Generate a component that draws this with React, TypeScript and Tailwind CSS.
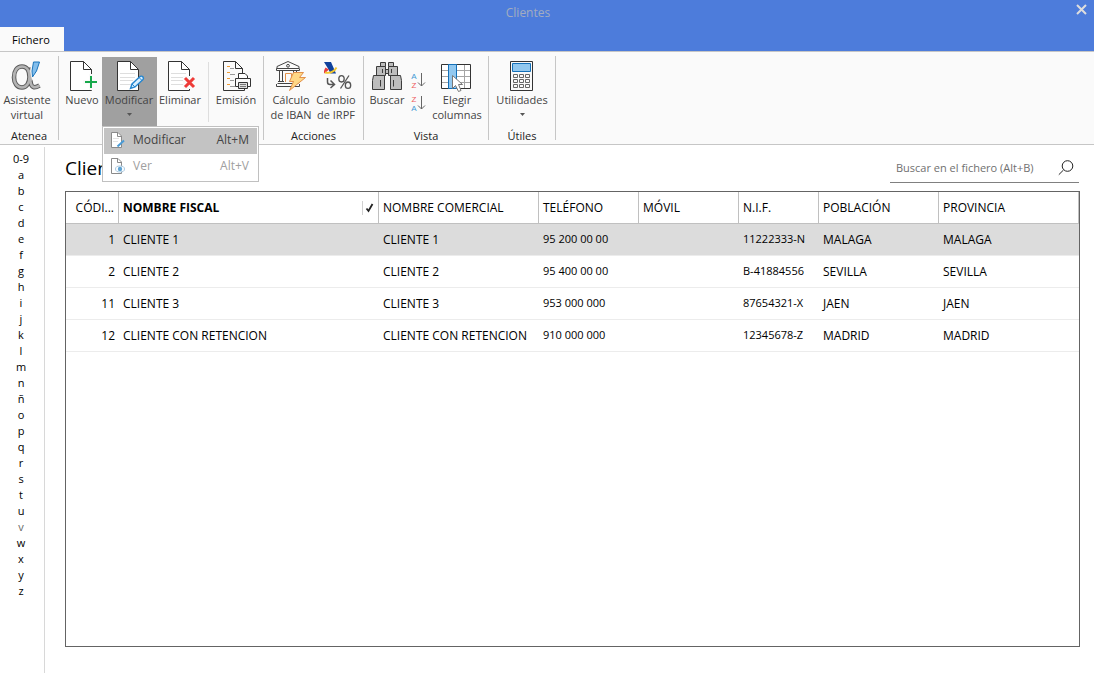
import type { ReactNode } from "react";

const letters = ["0-9", ..."abcdefghijklmnñopqrstuvwxyz"];

const columns = [
  { title: "CÓDI...", width: "w-[53px]" },
  { title: "NOMBRE FISCAL", width: "w-[260px]", sorted: true },
  { title: "NOMBRE COMERCIAL", width: "w-[160px]" },
  { title: "TELÉFONO", width: "w-[100px]", compact: true },
  { title: "MÓVIL", width: "w-[100px]", compact: true },
  { title: "N.I.F.", width: "w-[80px]", compact: true },
  { title: "POBLACIÓN", width: "w-[120px]" },
  { title: "PROVINCIA", width: "" },
];

const rows = [
  ["1", "CLIENTE 1", "CLIENTE 1", "95 200 00 00", "", "11222333-N", "MALAGA", "MALAGA"],
  ["2", "CLIENTE 2", "CLIENTE 2", "95 400 00 00", "", "B-41884556", "SEVILLA", "SEVILLA"],
  ["11", "CLIENTE 3", "CLIENTE 3", "953 000 000", "", "87654321-X", "JAEN", "JAEN"],
  ["12", "CLIENTE CON RETENCION", "CLIENTE CON RETENCION", "910 000 000", "", "12345678-Z", "MADRID", "MADRID"],
];

function Icon({ children }: { children: ReactNode }) {
  return (
    <svg viewBox="0 0 32 32" className="h-8 w-8 shrink-0" fill="none" aria-hidden="true">
      {children}
    </svg>
  );
}

function Sheet({ lines = false }: { lines?: boolean }) {
  return (
    <>
      <path d="M4.5 1.5H17.5L25.5 9.5V30.5H4.5Z" fill="#fff" stroke="#333" />
      <path d="M17.5 1.5V9.5H25.5" stroke="#333" />
      {lines && <path d="M7 13.5H22M7 17.5H22M7 20.5H20M7 24.5H20" stroke="#dedede" />}
    </>
  );
}

function AlphaIcon() {
  const alpha =
    "M18.5 17C18.5 23 15.5 27.5 11 27.5C6 27.5 3 23 3 17.5C3 11 6 6.5 11 6.5C16 6.5 18.5 11 18.5 17ZM20.5 8C18.5 13 18.5 19 20 24Q21.5 29.5 28.5 25.5";
  return (
    <Icon>
      <path d={alpha} stroke="#5c5c5c" strokeWidth="4.6" />
      <path d={alpha} stroke="#b4b4b4" strokeWidth="2.6" />
      <path d="M22.5 2H28.5L25.5 11L21.5 17.5L20.5 11Z" fill="#83beec" stroke="#fafafa" strokeWidth="2.5" />
      <path d="M22.5 2H28.5L25.5 11L21.5 17L21 11Z" fill="#83beec" stroke="#1b75bb" />
    </Icon>
  );
}

function NewIcon() {
  return (
    <Icon>
      <Sheet />
      <path d="M25 14V30M17 22H32" stroke="#fafafa" strokeWidth="4" />
      <path d="M25 16V28M19 22H31" stroke="#17a84b" strokeWidth="2" />
    </Icon>
  );
}

function EditIcon() {
  return (
    <Icon>
      <Sheet lines />
      <path d="M17.5 28.5L19 24L27 16.5Q29 15.5 30 17Q31 18.5 30 19.5L22 27Z" fill="#d9efff" stroke="#2485cf" strokeWidth="1.4" />
      <path d="M19 24L22 27M26 17.5L29 20.5" stroke="#2485cf" />
    </Icon>
  );
}

function DeleteIcon() {
  return (
    <Icon>
      <Sheet lines />
      <path d="M19 16H32V29H19Z" fill="#fafafa" />
      <path d="M21 18L30 27M30 18L21 27" stroke="#ee3b38" strokeWidth="3" />
    </Icon>
  );
}

function PrintIcon() {
  return (
    <Icon>
      <path d="M3.5 1.5H15.5L22.5 8.5V14M3.5 1.5V30.5H24.5V27M15.5 1.5V8.5H22.5" stroke="#333" />
      <path d="M7 6.5H10M7 12.5H10M7 18.5H10M7 24.5H10" stroke="#ef9c35" />
      <path d="M10 8.5H14M10 14.5H15M10 20.5H14M10 26.5H15" stroke="#999" />
      <path d="M15.5 18.5H30.5V26.5H15.5Z" fill="#fafafa" stroke="#333" />
      <path d="M18.5 18.5V13.5H25L27.5 16V18.5Z" fill="#fff" stroke="#333" />
      <path d="M18.5 22.5H27.5V28.5H18.5Z" fill="#ddd" stroke="#333" />
      <path d="M20 24.5H26M20 26.5H26" stroke="#777" />
    </Icon>
  );
}

function BankIcon() {
  return (
    <Icon>
      <path d="M2 8.5V6.5L13 1.5L24 6.5V8.5H1.5V10.5H24.5V8.5" stroke="#444" />
      <circle cx="13" cy="5.8" r="1.4" stroke="#444" />
      <path d="M4.5 11V21M7.5 11V21M18.5 11V21M21.5 11V21M3 21.5H9M17 21.5H23M2.5 23.5H23.5M1.5 26.5H24.5M1.5 24V26.5M24.5 24V26.5" stroke="#444" />
      <path d="M10.5 22V13.5H16.5V22" stroke="#e2914b" />
      <path d="M18.5 12.5H28.5L24.5 17.5H30.5L14.5 30.5L18.5 21.5H14.5Z" fill="#ffd886" stroke="#e2914b" />
    </Icon>
  );
}

function TaxIcon() {
  return (
    <Icon>
      <path d="M4 2H11L16 13.5H10.5L8 8.5Z" fill="#10429c" />
      <path d="M5.5 7.5L9 9.5L4.5 13.5Q3 12 5.5 7.5Z" fill="#e43b42" />
      <path d="M5 12.5Q13 14 16.5 7.5" stroke="#f4c72f" strokeWidth="1.8" />
      <path d="M7.5 18V22Q7.5 24.5 10 24.5H14M10.5 20.5L14.5 24.5L10.5 28" stroke="#555" strokeWidth="1.5" />
      <ellipse cx="21.5" cy="18.8" rx="2.7" ry="3.2" stroke="#555" strokeWidth="1.3" />
      <ellipse cx="28" cy="25.2" rx="2.7" ry="3.2" stroke="#555" strokeWidth="1.3" />
      <path d="M29 15.5L20.5 28.5" stroke="#555" strokeWidth="1.3" />
    </Icon>
  );
}

function BinocularsIcon() {
  return (
    <Icon>
      <g fill="#bdbdbd" stroke="#3c3c3c">
        <path d="M9.5 2.5H14.5V6.5H9.5ZM17.5 2.5H22.5V6.5H17.5ZM14 9.5H18V13.5H14Z" />
        <path d="M5.5 6.5H14.5V15.5H5.5ZM17.5 6.5H26.5V15.5H17.5Z" />
        <path d="M2.5 15.5H13.5V29.5H1.5V20.5ZM19.5 15.5H29.5L30.5 20.5V29.5H19.5Z" />
        <path d="M9.5 20V26.5M22.5 20V26.5M11.5 9V13M20.5 9V13" />
      </g>
    </Icon>
  );
}

function SortIcon({ top, bottom }: { top: "A" | "Z"; bottom: "A" | "Z" }) {
  return (
    <svg
      viewBox="0 0 16 18"
      className="h-[18px] w-4 overflow-visible font-['Liberation_Sans',sans-serif] text-[8px]"
      fill="none"
      aria-hidden="true"
    >
      <text x="3" y="8" textAnchor="middle" className={top === "A" ? "fill-[#4299d4]" : "fill-[#ee5a60]"}>
        {top}
      </text>
      <text x="3" y="17" textAnchor="middle" className={bottom === "A" ? "fill-[#4299d4]" : "fill-[#ee5a60]"}>
        {bottom}
      </text>
      <path d="M10.5 2V15M7 11.5L10.5 15L14 11.5" stroke="#666" />
    </svg>
  );
}

function ColumnsIcon() {
  return (
    <Icon>
      <path d="M.5 4.5H29.5V28.5H.5Z" fill="#fff" stroke="#333" />
      <path d="M1 10.5H29M1 16.5H29M1 22.5H29M23.5 5V28" stroke="#a5a5a5" />
      <path d="M7.5 4.5H15.5V28.5H7.5Z" fill="#92c8ef" stroke="#1470b9" />
      <path d="M11.5 15.5V28.5L14.5 25.5L17.5 31.5L20 30.5L17.5 24.5H21.5Z" fill="#fff" stroke="#777" />
    </Icon>
  );
}

function CalculatorIcon() {
  const keys = [14.5, 19.5, 24.5];
  return (
    <Icon>
      <path d="M4.5 1.5H26.5V30.5H4.5Z" fill="#fafafa" stroke="#333" />
      <path d="M6.5 3.5H24.5V11.5H6.5Z" fill="#92c8ef" stroke="#1470b9" />
      {keys.map((y) => (
        <path key={y} d={`M7.5 ${y}h4v3h-4ZM13.5 ${y}h4v3h-4ZM19.5 ${y}h4v3h-4Z`} stroke="#666" />
      ))}
    </Icon>
  );
}

function MenuIcon({ kind }: { kind: "edit" | "view" }) {
  return (
    <svg viewBox="0 0 16 16" className="h-4 w-4 shrink-0" fill="none" aria-hidden="true">
      <path d="M1.5 .5H8L11.5 4V15.5H1.5Z" fill="#fff" stroke="#8a8a8a" />
      <path d="M7.5 .5V4.5H11.5" stroke="#8a8a8a" />
      {kind === "edit" ? (
        <>
          <path d="M3 6.5H9M3 9.5H8" stroke="#e2e2e2" />
          <path d="M7.5 14.5L14 8.5" stroke="#4a9bd6" strokeWidth="2" />
        </>
      ) : (
        <>
          <ellipse cx="10" cy="11" rx="4.5" ry="3" fill="#fff" stroke="#a9c8df" />
          <circle cx="10" cy="11" r="2.2" fill="#5fa3d3" />
        </>
      )}
    </svg>
  );
}

function Caret() {
  return (
    <svg viewBox="0 0 5 3" className="mt-1.5 h-[3px] w-[5px]" aria-hidden="true">
      <path d="M0 0H5L2.5 3Z" fill="#555" />
    </svg>
  );
}

type RibbonButtonProps = {
  icon: ReactNode;
  label: string;
  width: string;
  caret?: boolean;
  active?: boolean;
};

function RibbonButton({ icon, label, width, caret, active }: RibbonButtonProps) {
  return (
    <button
      type="button"
      aria-haspopup={caret ? "menu" : undefined}
      className={`mt-px flex h-[69px] shrink-0 flex-col items-center pt-[3px] ${width} ${active ? "bg-[#a0a0a0]" : ""}`}
    >
      {icon}
      <span className="text-center leading-[15px] whitespace-pre text-[#444]">{label}</span>
      {caret && <Caret />}
    </button>
  );
}

function RibbonGroup({ title, children }: { title?: string; children: ReactNode }) {
  return (
    <>
      <section aria-label={title} className="shrink-0">
        <div className="flex h-[70px]">{children}</div>
        {title && <h2 className="mt-0.5 text-center leading-4 text-[#222]">{title}</h2>}
      </section>
      <div className="mb-1 w-px shrink-0 bg-[#c6c6c6]" />
    </>
  );
}

function EditMenu() {
  return (
    <div role="menu" className="absolute top-[70px] left-[43px] z-10 w-[157px] border border-[#c0c0c0] bg-white p-px text-[12px]">
      <button type="button" role="menuitem" className="flex h-[26px] w-full items-center bg-[#c3c3c3] pr-2 pb-[3px] pl-1.5 text-[#444]">
        <MenuIcon kind="edit" />
        <span className="ml-[7px]">Modificar</span>
        <span className="ml-auto">Alt+M</span>
      </button>
      <button type="button" role="menuitem" disabled className="flex h-[26px] w-full items-center pr-2 pb-[3px] pl-1.5 text-[#a0a0a0]">
        <MenuIcon kind="view" />
        <span className="ml-[7px]">Ver</span>
        <span className="ml-auto">Alt+V</span>
      </button>
    </div>
  );
}

function Ribbon() {
  return (
    <div className="flex h-[94px] border-t border-b border-[#c6c6c6] bg-[#fafafa] pt-1 text-[11px]">
      <RibbonGroup title="Atenea">
        <RibbonButton icon={<AlphaIcon />} label={"Asistente\nvirtual"} width="w-[58px] pr-1" />
      </RibbonGroup>
      <div className="relative flex">
        <RibbonGroup>
          <RibbonButton icon={<NewIcon />} label="Nuevo" width="ml-1 w-[39px] pr-px" />
          <RibbonButton icon={<EditIcon />} label="Modificar" width="w-[55px] pr-px" caret active />
          <RibbonButton icon={<DeleteIcon />} label="Eliminar" width="w-[48px] pr-0.5" />
          <div className="mt-1.5 mb-1 ml-[3px] w-px bg-[#dedede]" />
          <RibbonButton icon={<PrintIcon />} label="Emisión" width="w-[54px]" />
        </RibbonGroup>
        <EditMenu />
      </div>
      <RibbonGroup title="Acciones">
        <RibbonButton icon={<BankIcon />} label={"Cálculo\nde IBAN"} width="ml-1 w-[46px]" />
        <RibbonButton icon={<TaxIcon />} label={"Cambio\nde IRPF"} width="mr-[3px] w-[46px] pr-0.5" />
      </RibbonGroup>
      <RibbonGroup title="Vista">
        <RibbonButton icon={<BinocularsIcon />} label="Buscar" width="w-[46px]" />
        <div className="ml-px flex flex-col gap-[5px] pt-[15px]">
          <button type="button" aria-label="Orden ascendente">
            <SortIcon top="A" bottom="Z" />
          </button>
          <button type="button" aria-label="Orden descendente">
            <SortIcon top="Z" bottom="A" />
          </button>
        </div>
        <RibbonButton icon={<ColumnsIcon />} label={"Elegir\ncolumnas"} width="mr-px w-[60px]" />
      </RibbonGroup>
      <RibbonGroup title="Útiles">
        <RibbonButton icon={<CalculatorIcon />} label="Utilidades" width="w-[66px]" caret />
      </RibbonGroup>
    </div>
  );
}

function ClientTable() {
  return (
    <table className="w-full table-fixed border-separate border-spacing-0 text-[12px]">
      <thead>
        <tr className="h-8">
          {columns.map((col, i) => (
            <th
              key={col.title}
              className={`border-r border-b border-[#c0c0c0] whitespace-nowrap ${col.width} ${
                i === 0 ? "pr-1 text-right" : "pl-1 text-left"
              } ${col.sorted ? "font-bold" : "font-normal"}`}
            >
              {col.sorted ? (
                <span className="flex items-center justify-between">
                  {col.title}
                  <svg viewBox="0 0 16 14" className="h-[14px] w-4" fill="none" aria-hidden="true">
                    <path d="M.5 0V14" stroke="#d0d0d0" />
                    <path d="M4.5 7.5L6.5 10L10.5 3" stroke="#222" strokeWidth="1.8" />
                  </svg>
                </span>
              ) : (
                col.title
              )}
            </th>
          ))}
        </tr>
      </thead>
      <tbody>
        {rows.map((row, r) => (
          <tr key={row[0]} className={`h-8 ${r === 0 ? "bg-[#dcdcdc]" : ""}`}>
            {row.map((cell, i) => (
              <td
                key={i}
                className={`border-b border-[#ececec] whitespace-nowrap ${i === 0 ? "pr-1 text-right" : "pl-1"} ${
                  columns[i].compact ? "text-[11px]" : ""
                }`}
              >
                {cell}
              </td>
            ))}
          </tr>
        ))}
      </tbody>
    </table>
  );
}

export default function App() {
  return (
    <div className="flex min-h-screen flex-col bg-white font-['Open_Sans','Noto_Sans',sans-serif] text-black">
      <header className="bg-[#4d7cdb]">
        <div className="flex h-[27px] items-start">
          <h1 className="flex-1 pt-1 text-center text-[12px] leading-[18px] text-[#a3acc0]">Clientes</h1>
          <button type="button" aria-label="Cerrar" className="mt-1 mr-[7px] ml-5 h-[11px] w-[11px]">
            <svg viewBox="0 0 11 11" fill="none" aria-hidden="true">
              <path d="M1 1L10 10M10 1L1 10" stroke="#dedede" strokeWidth="2" />
            </svg>
          </button>
        </div>
        <button type="button" className="block h-6 w-16 bg-[#fafafa] pt-0.5 pr-0.5 text-[11px]">
          Fichero
        </button>
      </header>

      <Ribbon />

      <div className="flex flex-1">
        <nav aria-label="Índice" className="mt-0.5 w-[45px] border-r border-[#d8d8d8] pt-1 pr-0.5 text-center text-[11px] leading-4">
          {letters.map((letter) => (
            <a key={letter} href="#" className={`block ${letter === "v" ? "text-[#666]" : ""}`}>
              {letter}
            </a>
          ))}
        </nav>

        <main className="flex flex-1 flex-col pt-2 pr-[14px] pb-[26px] pl-5">
          <div className="mb-2 flex h-[30px] items-center justify-between">
            <h2 className="text-[19px] leading-[30px]">Clientes</h2>
            <label className="mr-px flex h-[30px] w-[189px] items-center border-b border-[#808080] pt-px pr-[5px] pl-1.5">
              <input
                type="text"
                aria-label="Buscar en el fichero"
                placeholder="Buscar en el fichero (Alt+B)"
                className="min-w-0 flex-1 text-[11px] outline-none placeholder:text-[#707070]"
              />
              <svg viewBox="0 0 16 16" className="h-4 w-4" fill="none" stroke="#222" aria-hidden="true">
                <circle cx="9.5" cy="6" r="5.3" />
                <path d="M5.5 10L.8 14.7" />
              </svg>
            </label>
          </div>
          <div className="flex-1 border border-[#646464]">
            <ClientTable />
          </div>
        </main>
      </div>
    </div>
  );
}
